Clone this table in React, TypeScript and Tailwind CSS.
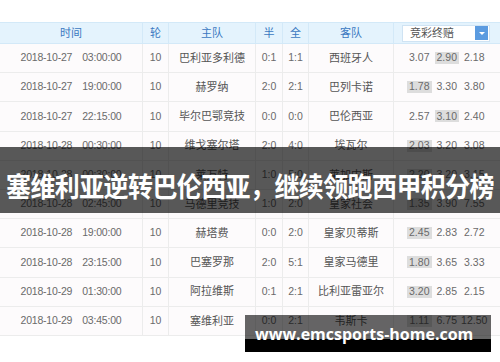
const rows = [
  { date: "2018-10-27", time: "03:00:00", home: "巴利亚多利德", half: "0:1", full: "1:1", away: "西班牙人", odds: ["3.07", "2.90", "2.18"], hi: 1 },
  { date: "2018-10-27", time: "19:00:00", home: "赫罗纳", half: "2:0", full: "2:1", away: "巴列卡诺", odds: ["1.78", "3.30", "3.80"], hi: 0 },
  { date: "2018-10-27", time: "22:15:00", home: "毕尔巴鄂竞技", half: "0:0", full: "0:0", away: "巴伦西亚", odds: ["2.57", "3.10", "2.40"], hi: 1 },
  { date: "2018-10-28", time: "00:30:00", home: "维戈塞尔塔", half: "2:0", full: "4:0", away: "埃瓦尔", odds: ["2.03", "3.20", "3.08"], hi: 0 },
  { date: "2018-10-28", time: "00:30:00", home: "莱万特", half: "1:0", full: "5:0", away: "莱加内斯", odds: ["2.20", "3.20", "3.15"], hi: 0 },
  { date: "2018-10-28", time: "02:45:00", home: "马德里竞技", half: "1:0", full: "2:0", away: "皇家社会", odds: ["1.35", "3.90", "7.55"], hi: 0 },
  { date: "2018-10-28", time: "19:00:00", home: "赫塔费", half: "0:0", full: "2:0", away: "皇家贝蒂斯", odds: ["2.45", "2.83", "2.72"], hi: 0 },
  { date: "2018-10-28", time: "23:15:00", home: "巴塞罗那", half: "2:0", full: "5:1", away: "皇家马德里", odds: ["1.80", "3.65", "3.33"], hi: 0 },
  { date: "2018-10-29", time: "01:30:00", home: "阿拉维斯", half: "0:1", full: "2:1", away: "比利亚雷亚尔", odds: ["3.20", "2.85", "2.15"], hi: 0 },
  { date: "2018-10-29", time: "03:45:00", home: "塞维利亚", half: "0:0", full: "2:1", away: "韦斯卡", odds: ["1.11", "6.75", "12.50"], hi: 0 },
];

const font = "font-['Liberation_Sans','Noto_Sans_CJK_SC',sans-serif]";

export default function App() {
  return (
    <div className={`relative h-[362px] w-[500px] overflow-hidden bg-white pt-[22px] ${font}`}>
      {/* header */}
      <div className="flex h-[22px] border-y border-[#d3e9f8] bg-[#e4f3fd] text-[11px] text-[#3b78c1] *:flex *:items-center *:justify-center *:border-r *:border-[#d3e9f8]">
        <div className="w-[143px]">时间</div>
        <div className="w-[26px]">轮</div>
        <div className="w-[87px]">主队</div>
        <div className="w-[27px]">半</div>
        <div className="w-[26px]">全</div>
        <div className="w-[85px]">客队</div>
        <div className="w-[106px] !justify-start !border-r-0 pl-[8px]">
          <div className="flex h-[17px] w-[88px] items-center justify-between border border-[#cfe3f3] bg-white pl-[7px] pr-px text-[11px] text-[#555]">
            <span>竞彩终赔</span>
            <span className="flex h-[14px] w-[13px] items-center justify-center bg-[#5b9be0]">
              <span className="h-0 w-0 border-x-[3px] border-t-[3px] border-x-transparent border-t-white" />
            </span>
          </div>
        </div>
      </div>

      {/* rows */}
      {rows.map((r, i) => (
        <div
          key={i}
          className="flex h-[29.2px] border-b border-[#ececec] bg-[#fdfbfc] text-[10.5px] text-[#6a6a6a] *:flex *:items-center *:justify-center *:border-r *:border-[#ececec]"
        >
          <div className="w-[143px] gap-[10px] tracking-[-0.2px]">
            <span>{r.date}</span>
            <span>{r.time}</span>
          </div>
          <div className="w-[26px]">10</div>
          <div className="w-[87px] text-[11px] text-[#555]">{r.home}</div>
          <div className="w-[27px]">{r.half}</div>
          <div className="w-[26px]">{r.full}</div>
          <div className="w-[85px] text-[11px] text-[#555]">{r.away}</div>
          <div className="w-[106px] !justify-start gap-[3px] !border-r-0 pl-[13px]">
            {r.odds.map((o, j) => (
              <span
                key={j}
                className={`flex h-[12px] w-[24.5px] items-center justify-center ${j === r.hi ? "bg-[#dddddd]" : ""}`}
              >
                {o}
              </span>
            ))}
          </div>
        </div>
      ))}

      {/* headline banner */}
      <div className="absolute left-0 top-[147px] flex h-[66px] w-[500px] items-center justify-center overflow-hidden bg-black/65 pt-[10px]">
        <span className="scale-y-110 whitespace-nowrap font-['Noto_Sans_CJK_SC',sans-serif] text-[25px] font-bold leading-none tracking-[-0.6px] text-white">
          塞维利亚逆转巴伦西亚，继续领跑西甲积分榜
        </span>
      </div>

      {/* watermark */}
      <div className="absolute left-[245px] top-[315px] flex h-[37px] w-[246px] flex-col">
        <div className="h-[24px] bg-black/60" />
        <div className="h-[13px] bg-black" />
        <span className="absolute left-[10px] top-[11px] whitespace-nowrap font-['Open_Sans',sans-serif] text-[16px] font-bold leading-none text-white">
          www.emcsports-home.com
        </span>
      </div>
    </div>
  );
}
